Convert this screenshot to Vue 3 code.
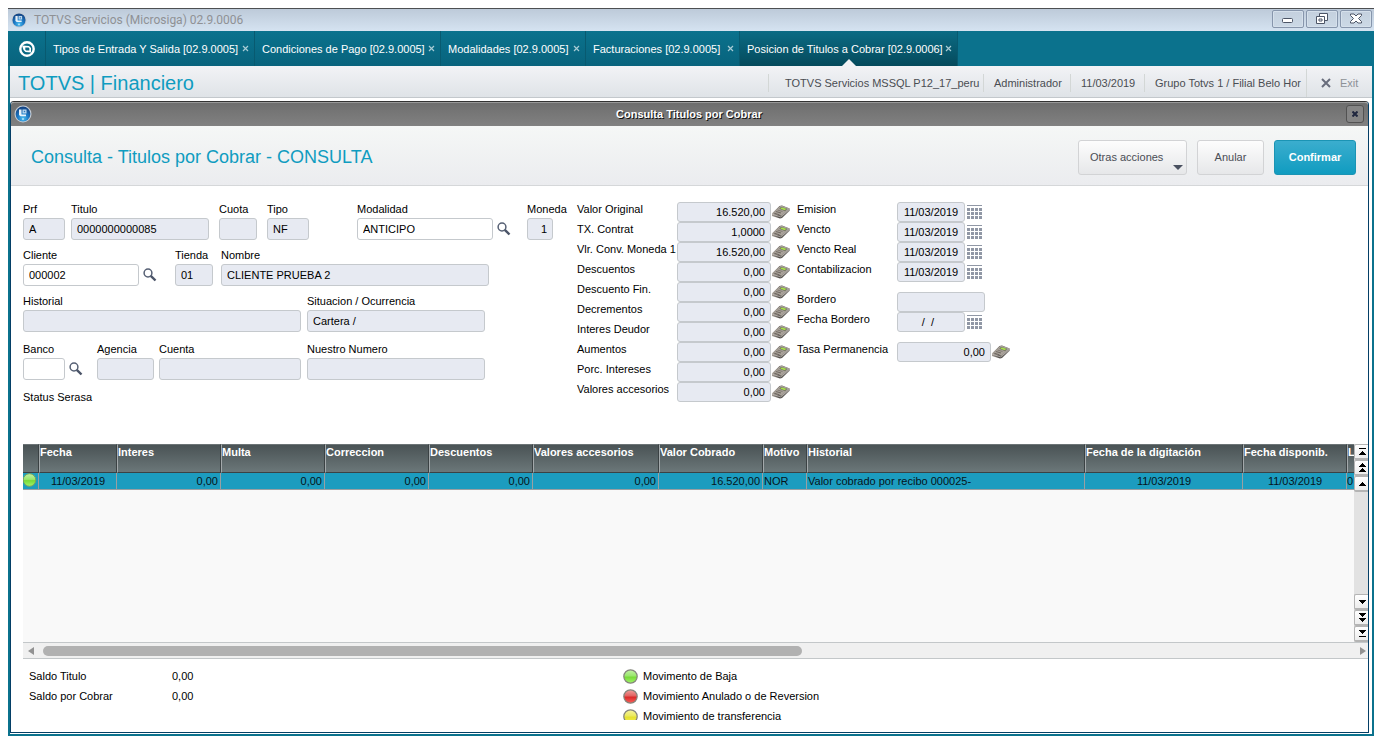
<script setup>
const tabs = [
  { title: 'Tipos de Entrada Y Salida [02.9.0005]', width: 209 },
  { title: 'Condiciones de Pago [02.9.0005]', width: 186 },
  { title: 'Modalidades [02.9.0005]', width: 145 },
  { title: 'Facturaciones [02.9.0005]', width: 154 },
  { title: 'Posicion de Titulos a Cobrar [02.9.0006]', width: 218, active: true },
]

const rows = [
  [
    { id: 'prf', label: 'Prf', value: 'A', width: 42, after: 6 },
    { id: 'titulo', label: 'Titulo', value: '0000000000085', width: 138, after: 10 },
    { id: 'cuota', label: 'Cuota', value: '', width: 38, after: 10 },
    { id: 'tipo', label: 'Tipo', value: 'NF', width: 42, after: 48 },
    { id: 'modalidad', label: 'Modalidad', value: 'ANTICIPO', width: 136, search: true, after: 14 },
    { id: 'moneda', label: 'Moneda', value: '1', width: 26, right: true, after: 0 },
  ],
  [
    { id: 'cliente', label: 'Cliente', value: '000002', width: 116, search: true, after: 16 },
    { id: 'tienda', label: 'Tienda', value: '01', width: 38, after: 8 },
    { id: 'nombre', label: 'Nombre', value: 'CLIENTE PRUEBA 2', width: 268, after: 0 },
  ],
  [
    { id: 'historial', label: 'Historial', value: '', width: 278, after: 6 },
    { id: 'situacion', label: 'Situacion / Ocurrencia', value: 'Cartera /', width: 178, after: 0 },
  ],
  [
    { id: 'banco', label: 'Banco', value: '', width: 42, search: true, after: 12 },
    { id: 'agencia', label: 'Agencia', value: '', width: 57, after: 5 },
    { id: 'cuenta', label: 'Cuenta', value: '', width: 142, after: 6 },
    { id: 'nuestro', label: 'Nuestro Numero', value: '', width: 178, after: 0 },
  ],
]

const amounts = [
  ['Valor Original', '16.520,00'],
  ['TX. Contrat', '1,0000'],
  ['Vlr. Conv. Moneda 1', '16.520,00'],
  ['Descuentos', '0,00'],
  ['Descuento Fin.', '0,00'],
  ['Decrementos', '0,00'],
  ['Interes Deudor', '0,00'],
  ['Aumentos', '0,00'],
  ['Porc. Intereses', '0,00'],
  ['Valores accesorios', '0,00'],
]

const dateGroups = [
  [
    { label: 'Emision', value: '11/03/2019', kind: 'date' },
    { label: 'Vencto', value: '11/03/2019', kind: 'date' },
    { label: 'Vencto Real', value: '11/03/2019', kind: 'date' },
    { label: 'Contabilizacion', value: '11/03/2019', kind: 'date' },
  ],
  [
    { label: 'Bordero', value: '', kind: 'text' },
    { label: 'Fecha Bordero', value: '/  /  ', kind: 'date' },
  ],
  [{ label: 'Tasa Permanencia', value: '0,00', kind: 'number' }],
]

const columns = [
  { label: 'Fecha', width: 78, value: '11/03/2019', align: 'center' },
  { label: 'Interes', width: 104, value: '0,00', align: 'right' },
  { label: 'Multa', width: 104, value: '0,00', align: 'right' },
  { label: 'Correccion', width: 104, value: '0,00', align: 'right' },
  { label: 'Descuentos', width: 104, value: '0,00', align: 'right' },
  { label: 'Valores accesorios', width: 126, value: '0,00', align: 'right' },
  { label: 'Valor Cobrado', width: 104, value: '16.520,00', align: 'right' },
  { label: 'Motivo', width: 44, value: 'NOR', align: 'left' },
  { label: 'Historial', width: 278, value: 'Valor cobrado por recibo 000025-', align: 'left' },
  { label: 'Fecha de la digitación', width: 158, value: '11/03/2019', align: 'center' },
  { label: 'Fecha disponib.', width: 104, value: '11/03/2019', align: 'center' },
]

const legend = [
  { color: 'green', text: 'Movimento de Baja', height: 15 },
  { color: 'red', text: 'Movimiento Anulado o de Reversion', height: 15 },
  { color: 'yellow', text: 'Movimiento de transferencia', height: 11 },
]

const upButtons = [
  { name: 'Primero', d: 'M4 3h7v1H4zM7 6h1v1h1v1h1v1h1v1H4V9h1V8h1V7h1z' },
  { name: 'Pagina anterior', d: 'M7 2h1v1h1v1h1v1h1v1H4V5h1V4h1V3h1zM7 7h1v1h1v1h1v1h1v1H4v-1h1V9h1V8h1z' },
  { name: 'Anterior', d: 'M7 5h1v1h1v1h1v1h1v1H4V8h1V7h1V6h1z' },
]
const downButtons = [
  { name: 'Siguiente', d: 'M4 5h7v1h-1v1H9v1H8v1H7V8H6V7H5V6H4z' },
  { name: 'Pagina siguiente', d: 'M4 2h7v1h-1v1H9v1H8v1H7V5H6V4H5V3H4zM4 7h7v1h-1v1H9v1H8v1H7v-1H6V9H5V8H4z' },
  { name: 'Ultimo', d: 'M4 3h7v1h-1v1H9v1H8v1H7V6H6V5H5V4H4zM4 9h7v1H4z' },
]
</script>

<template>
  <svg class="defs" width="0" height="0" aria-hidden="true">
    <defs>
      <radialGradient id="globe-fill" cx="50%" cy="80%" r="75%">
        <stop offset="0" stop-color="#4fc0f0" />
        <stop offset="0.45" stop-color="#1d7cc8" />
        <stop offset="1" stop-color="#154484" />
      </radialGradient>
      <linearGradient id="ball-green" x1="0" y1="0" x2="0" y2="1">
        <stop offset="0" stop-color="#c2f2a6" /><stop offset="0.45" stop-color="#9be66e" />
        <stop offset="0.55" stop-color="#78da38" /><stop offset="1" stop-color="#a2f56c" />
      </linearGradient>
      <linearGradient id="ball-red" x1="0" y1="0" x2="0" y2="1">
        <stop offset="0" stop-color="#f0a09d" /><stop offset="0.45" stop-color="#e26462" />
        <stop offset="0.55" stop-color="#db2a29" /><stop offset="1" stop-color="#fa625c" />
      </linearGradient>
      <linearGradient id="ball-yellow" x1="0" y1="0" x2="0" y2="1">
        <stop offset="0" stop-color="#f5f3a0" /><stop offset="0.45" stop-color="#ebe95e" />
        <stop offset="0.55" stop-color="#e4e02e" /><stop offset="1" stop-color="#f4f056" />
      </linearGradient>
      <linearGradient id="calc-side" x1="0" y1="0" x2="1" y2="0">
        <stop offset="0" stop-color="#a39c94" /><stop offset="0.45" stop-color="#4f4b47" /><stop offset="1" stop-color="#8f8b86" />
      </linearGradient>
      <symbol id="globe" viewBox="0 0 18 18">
        <circle cx="9" cy="9" r="8.500" fill="#c4ccd4" />
        <circle cx="9" cy="9" r="7.400" fill="url(#globe-fill)" />
        <path d="M5 4.500h2.500v5H12v1.800H6.500L5 10z" fill="#fff" opacity="0.9" />
        <path d="M8.500 4.500h4v4h-4z" fill="#d9ecf9" opacity="0.85" />
        <path d="M9.800 5.800h1.400v1.400H9.800z" fill="#2a7cc0" />
        <circle cx="9" cy="14" r="1" fill="#b5e4fa" />
      </symbol>
      <symbol id="lens" viewBox="0 0 14 14">
        <circle cx="5" cy="5" r="3.900" fill="#fff" stroke="#566074" stroke-width="1.500" />
        <path d="M7.800 7.800l4.700 4.700" stroke="#4b5468" stroke-width="2.400" />
      </symbol>
      <symbol id="calculator" viewBox="0 0 18 14">
        <path d="M0 8.500L7.500 1 10 0.500 17.800 3.500v2.200L10 13 8 13.500 0 11z" fill="url(#calc-side)" />
        <path d="M0.300 8.300L7.800 1.200 10 0.800l7.500 2.700L9.500 10.800z" fill="#a9a29a" />
        <path d="M7.200 3.800L9 1.900l6.300 1.800-2.200 2.500z" fill="#6f7260" />
        <path d="M8.400 3.700L9.600 2.400l4.700 1.300-1.500 1.500z" fill="#a8e04a" />
        <path d="M3.800 6.500l5.200 1.500M2.200 8.200l5.300 1.600" stroke="#6f6861" stroke-width="1" fill="none" />
        <path d="M5.500 5l5 1.500" stroke="#7d766f" stroke-width="0.900" fill="none" />
        <path d="M0.300 9.200L8.800 11.900l8.700-7.700" fill="none" stroke="#cbc7c1" stroke-width="0.700" />
      </symbol>
      <symbol id="calendar" viewBox="0 0 16 14">
        <path d="M0 0h15v1H0zM0 3h3v3H0zM4 3h3v3H4zM8 3h3v3H8zM12 3h3v3h-3zM0 7h3v3H0zM4 7h3v3H4zM8 7h3v3H8zM12 7h3v3h-3zM0 11h3v3H0zM4 11h3v3H4zM8 11h3v3H8zM12 11h3v3h-3z" fill="#9097a5" />
      </symbol>
    </defs>
  </svg>

  <div class="window">
    <header class="caption">
      <svg class="caption-icon" width="16" height="16"><use href="#globe" /></svg>
      <span class="caption-title">TOTVS Servicios (Microsiga) 02.9.0006</span>
      <div class="caption-buttons">
        <button type="button" aria-label="Minimizar">
          <svg width="12" height="12" viewBox="0 0 12 12"><rect x="0.500" y="5.500" width="10" height="4" rx="1" fill="#fff" stroke="#4c5566" /></svg>
        </button>
        <button type="button" aria-label="Restaurar">
          <svg width="12" height="12" viewBox="0 0 12 12" fill="#fff" stroke="#4c5566"><path d="M3.500 0.500h8v7h-8z" /><path d="M0.500 3.500h8v7h-8z" /><path d="M3 6h3v2H3z" /></svg>
        </button>
        <button type="button" aria-label="Cerrar">
          <svg width="12" height="12" viewBox="0 0 12 12"><path d="M0.500 1h3.500l2 2 2-2h3.500v1.500L8.500 5.500l3 3V10H8L6 8l-2 2H0.500V8.500l3-3-3-3z" fill="#fff" stroke="#4c5566" /></svg>
        </button>
      </div>
    </header>

    <nav class="tabs" aria-label="Rutinas abiertas">
      <button class="home" type="button" aria-label="Inicio">
        <svg width="16" height="16" viewBox="0 0 16 16"><circle cx="8" cy="8" r="6.700" fill="none" stroke="#fff" stroke-width="2.400" /><path d="M3 4.500l7 0.500 2 2v4.500L6.500 11 4.500 9z" fill="#fff" /><path d="M6.300 6.500h3.200l0.800 0.800v2.200H7.200L6.300 8.700z" fill="#0a6a85" /></svg>
      </button>
      <div v-for="t in tabs" :key="t.title" class="tab" :class="{ active: t.active }" :style="{ width: t.width + 'px' }">
        <button class="tab-title" type="button">{{ t.title }}</button>
        <button class="tab-close" type="button" :aria-label="'Cerrar ' + t.title">
          <svg width="7" height="7" viewBox="0 0 7 7"><path d="M1 1l5 5M6 1L1 6" stroke="#a9ccd5" stroke-width="1.200" /></svg>
        </button>
      </div>
    </nav>

    <div class="brand">
      <h1>TOTVS | Financiero</h1>
      <ul class="session">
        <li class="s-env">TOTVS Servicios MSSQL P12_17_peru</li>
        <li class="s-user">Administrador</li>
        <li class="s-date">11/03/2019</li>
        <li class="s-group">Grupo Totvs 1 / Filial Belo Hor</li>
        <li class="s-exit">
          <button class="exit" type="button">
            <svg width="10" height="10" viewBox="0 0 10 10"><path d="M1 1l8 8M9 1L1 9" stroke="#686d7c" stroke-width="2" /></svg>
            Exit
          </button>
        </li>
      </ul>
    </div>

    <main class="dialog">
      <div class="dialog-bar">
        <svg width="18" height="18"><use href="#globe" /></svg>
        <span class="dialog-title">Consulta Titulos por Cobrar</span>
        <button class="dialog-close" type="button" aria-label="Cerrar">
          <svg width="6" height="6" viewBox="0 0 6 6"><path d="M0.500 0.500l5 5M5.500 0.500l-5 5" stroke="#20273f" stroke-width="2" /></svg>
        </button>
      </div>

      <div class="actions">
        <h2>Consulta - Titulos por Cobrar - CONSULTA</h2>
        <button class="btn more" type="button">Otras acciones<i class="caret"></i></button>
        <button class="btn cancel" type="button">Anular</button>
        <button class="btn primary" type="button">Confirmar</button>
      </div>

      <form class="form" @submit.prevent>
        <div class="general">
          <div v-for="(row, r) in rows" :key="r" class="row">
            <div v-for="f in row" :key="f.id" class="field" :style="{ marginRight: f.after + 'px' }">
              <label :for="f.id">{{ f.label }}</label>
              <div class="control">
                <input :id="f.id" type="text" :value="f.value" :readonly="!f.search" :class="{ editable: f.search, right: f.right }" :style="{ width: f.width + 'px' }" />
                <button v-if="f.search" class="lookup" type="button" :aria-label="'Buscar ' + f.label"><svg width="14" height="14"><use href="#lens" /></svg></button>
              </div>
            </div>
          </div>
          <p class="serasa">Status Serasa</p>
        </div>

        <div class="stack amounts">
          <div v-for="(a, i) in amounts" :key="a[0]" class="line">
            <label :for="'amount' + i">{{ a[0] }}</label>
            <input :id="'amount' + i" class="number" type="text" :value="a[1]" readonly />
            <button class="tool" type="button" :aria-label="'Calculadora ' + a[0]"><svg width="18" height="14"><use href="#calculator" /></svg></button>
          </div>
        </div>

        <div class="stack">
          <div v-for="(g, k) in dateGroups" :key="k" class="group">
            <div v-for="(f, i) in g" :key="f.label" class="line">
              <label :for="'data' + k + i">{{ f.label }}</label>
              <input :id="'data' + k + i" :class="f.kind" type="text" :value="f.value" readonly />
              <button v-if="f.kind === 'date'" class="tool" type="button" :aria-label="'Calendario ' + f.label"><svg class="cal" width="16" height="14"><use href="#calendar" /></svg></button>
              <button v-if="f.kind === 'number'" class="tool" type="button" :aria-label="'Calculadora ' + f.label"><svg width="18" height="14"><use href="#calculator" /></svg></button>
            </div>
          </div>
        </div>
      </form>

      <section class="browse">
        <div class="browse-main">
          <div class="table-wrap">
            <table>
              <colgroup>
                <col class="col-status" />
                <col v-for="c in columns" :key="c.label" :style="{ width: c.width + 'px' }" />
                <col />
              </colgroup>
              <thead>
                <tr><th scope="col"></th><th v-for="c in columns" :key="c.label" scope="col">{{ c.label }}</th><th scope="col">L</th></tr>
              </thead>
              <tbody>
                <tr>
                  <td class="status"><svg width="14" height="14" viewBox="0 0 14 14"><circle cx="6.500" cy="7" r="6.300" fill="url(#ball-green)" stroke="#7aa35c" /></svg></td>
                  <td v-for="c in columns" :key="c.label" :class="c.align">{{ c.value }}</td>
                  <td>0</td>
                </tr>
              </tbody>
            </table>
          </div>
          <div class="v-scroll">
            <button v-for="b in upButtons" :key="b.name" type="button" :aria-label="b.name"><svg width="13" height="13"><path :d="b.d" /></svg></button>
            <span class="v-track"></span>
            <button v-for="b in downButtons" :key="b.name" type="button" :aria-label="b.name"><svg width="13" height="13"><path :d="b.d" /></svg></button>
          </div>
        </div>
        <div class="h-scroll">
          <button type="button" aria-label="Izquierda"><svg width="6" height="8"><path d="M6 0v8L0 4z" fill="#929292" /></svg></button>
          <span class="h-track"><span class="h-thumb"></span></span>
          <button type="button" aria-label="Derecha"><svg width="6" height="8"><path d="M0 0v8l6-4z" fill="#929292" /></svg></button>
        </div>
      </section>

      <footer class="summary">
        <dl>
          <dt>Saldo Titulo</dt><dd>0,00</dd>
          <dt>Saldo por Cobrar</dt><dd>0,00</dd>
        </dl>
        <ul>
          <li v-for="l in legend" :key="l.color">
            <span class="ball"><svg width="15" :height="l.height"><circle cx="7.500" cy="7.500" r="6.700" :fill="'url(#ball-' + l.color + ')'" stroke="#85857c" stroke-width="1.200" /></svg></span>
            {{ l.text }}
          </li>
        </ul>
      </footer>
    </main>
  </div>
</template>

<style>
body { background: #fff; }
</style>

<style scoped>
* { box-sizing: border-box; }
button, input { font: inherit; color: inherit; }
button { padding: 0; border: 0; background: none; cursor: pointer; }
svg { display: block; flex: none; }
h1, h2, p, ul, dl, dd { margin: 0; padding: 0; font-weight: normal; }
ul { list-style: none; }
.defs { position: absolute; }

.window {
  display: flex;
  flex-direction: column;
  min-height: calc(100vh - 16px);
  margin: 8px;
  border: 2px solid #0b728d;
  border-top: 0;
  font: 11px/14px "Liberation Sans", Arial, sans-serif;
  color: #000;
}
.caption {
  display: flex;
  align-items: center;
  height: 23px;
  margin: 0 -2px;
  padding-left: 3px;
  border-top: 1px solid #4d4f52;
  background: linear-gradient(#bdcad9, #d5e3f1);
}
.caption-title { margin-left: 7px; flex: 1; font: 12px/16px Roboto, "Noto Sans", sans-serif; color: #8f9195; }
.caption-buttons { display: flex; align-self: flex-start; gap: 2px; padding: 1px 2px 0 0; }
.caption-buttons button {
  display: flex; align-items: center; justify-content: center;
  width: 32px; height: 18px;
  border: 1px solid #8796ac; border-radius: 2px;
  background: linear-gradient(#c4d0de, #ccd9e6);
  box-shadow: inset 0 0 0 1px #d5e0eb;
}

.tabs { display: flex; height: 35px; margin: 0 -2px; background: #0b728d; }
.home { display: flex; align-items: center; justify-content: center; width: 38px; border-right: 1px solid #085a70; background: linear-gradient(#0b728d, #08637d); }
.tab {
  position: relative;
  display: flex; align-items: center; justify-content: space-between;
  padding: 0 5px 0 7px;
  border-right: 1px solid #085a70;
  background: linear-gradient(#0b728d, #08637d);
  color: #fff; white-space: nowrap;
}
.tab.active { background: linear-gradient(#0b6b84, #054a5c); }
.tab.active::after {
  content: ""; position: absolute; left: 50%; bottom: 0; margin-left: -7px;
  border: 7px solid transparent; border-top: 0; border-bottom-color: #f1f2f5;
}

.brand {
  display: flex; align-items: center; justify-content: space-between;
  height: 32px; padding-left: 8px;
  border-bottom: 1px solid #c3c8cc;
  background: linear-gradient(#f2f3f6, #dfe3e7);
}
h1 { padding-top: 2px; font-size: 20px; line-height: 30px; color: #0f9cc0; }
.session { display: flex; height: 31px; padding-top: 2px; align-items: center; color: #4a4d52; white-space: nowrap; }
.session li { height: 18px; line-height: 18px; border-left: 1px solid #d3d7d6; padding-left: 10px; }
.s-env { width: 215px; }
.session .s-env { padding-left: 16px; }
.s-user { width: 87px; }
.s-date { width: 74px; }
.s-group { width: 162px; }
.session .s-exit { display: flex; align-items: center; width: 66px; height: 28px; padding-left: 14px; }
.exit { display: flex; align-items: center; gap: 9px; color: #8d9197; }

.dialog {
  display: flex; flex-direction: column; flex: 1;
  margin: 3px 3px 1px 0;
  border: 1px solid #053f66; border-top-color: #333;
  border-radius: 4px 4px 0 0;
}
.dialog-bar {
  display: flex; align-items: center;
  height: 24px; padding: 0 4px 2px 3px;
  border-top: 1px solid #999; border-radius: 3px 3px 0 0;
  background: linear-gradient(#6e6e6e, #818181);
}
.dialog-title { flex: 1; text-align: center; font-weight: bold; color: #fff; text-shadow: 1px 1px 0 #111; }
.dialog-close { display: flex; align-items: center; justify-content: center; width: 18px; height: 18px; border: 1px solid #525252; border-radius: 3px; background: #858585; }

.actions {
  display: flex; align-items: center; gap: 10px;
  height: 60px; padding: 3px 12px 0 20px;
  border-bottom: 1px solid #d5d7d9;
  background: linear-gradient(#f5f7f6, #ebecef);
}
h2 { flex: 1; font-size: 18px; line-height: 24px; color: #0f9cc0; }
.btn {
  position: relative; height: 35px;
  border: 1px solid #d2d3d5; border-radius: 3px;
  background: linear-gradient(#fdfdfd, #e6e7e9);
  color: #4a4d55;
}
.more { width: 109px; padding-left: 11px; text-align: left; }
.cancel { width: 67px; }
.primary { width: 82px; border-color: #1b94b4; background: linear-gradient(#3badce, #109cc0); color: #fff; font-weight: bold; }
.caret { position: absolute; right: 3px; bottom: 4px; border: 5px solid transparent; border-bottom: 0; border-top-color: #4a5160; }

.form { display: flex; padding: 15px 12px 39px; }
.general { width: 554px; flex: none; }
.row { display: flex; margin-bottom: 7px; }
.row:nth-child(3), .row:nth-child(4) { margin-bottom: 9px; }
.field label { display: block; width: 0; height: 17px; line-height: 17px; white-space: nowrap; }
.control { display: flex; align-items: center; }
input {
  height: 22px; padding: 0 5px;
  border: 1px solid #c5c9cd; border-radius: 3px;
  background: #e7eaf2; outline: 0;
}
.editable { background: #fff; }
.right { text-align: right; }
.lookup { width: 20px; padding-left: 4px; }
.serasa { line-height: 16px; }

.stack { padding-top: 1px; width: 220px; }
.line { display: flex; align-items: center; height: 20px; }
.line label { align-self: flex-start; width: 100px; flex: none; white-space: nowrap; }
.line input { height: 20px; }
.number { width: 94px; text-align: right; }
.date { width: 68px; text-align: center; white-space: pre; }
.text { width: 88px; }
.tool { padding-left: 1px; }
.cal { margin-left: 1px; }
.group { margin-bottom: 10px; }

.browse { display: flex; flex-direction: column; flex: 1; margin-left: 12px; }
.browse-main { display: flex; flex: 1; background: #f9f9f9; }
.table-wrap { flex: 1; min-width: 0; overflow: hidden; }
table { width: 100%; table-layout: fixed; border-collapse: separate; border-spacing: 0; }
.col-status { width: 16px; }
th, td { padding: 0; overflow: hidden; white-space: nowrap; }
th {
  height: 29px; vertical-align: top; text-align: left; line-height: 15px;
  border-top: 1px solid #6c7476; border-right: 1px solid #3b4244; border-bottom: 1px solid #3b4244; border-left: 1px solid #a3a9ab;
  background: linear-gradient(#4a5355, #6b7779); color: #fff;
}
th:first-child { border-left: 0; }
td { height: 17px; padding-left: 1px; line-height: 16px; border-right: 1px solid #9a9fa2; border-bottom: 1px solid #9a9fa2; background: #1c9cbf; color: #06141a; text-align: left; }
th:last-child, td:last-child { border-right: 0; padding: 0; }
td.right { padding-right: 2px; text-align: right; }
td.center { text-align: center; }
td.status { padding: 0; vertical-align: top; }

.v-scroll { display: flex; flex-direction: column; width: 14px; background: #e2e2e2; }
.v-scroll button { display: flex; height: 16px; border: 1px solid #b4b4b4; border-right: 0; border-bottom-width: 2px; border-radius: 2px 0 0 2px; background: linear-gradient(#fff, #ededed); overflow: hidden; }
.v-track { flex: 1; }
.h-scroll { display: flex; align-items: center; height: 17px; padding: 0 2px 0 5px; border-top: 1px solid #c3c7c9; border-bottom: 1px solid #c3c7c9; background: #f0f0f0; }
.h-track { flex: 1; margin: 0 9px; }
.h-thumb { display: block; width: 58%; height: 10px; border-radius: 5px; background: #b1b1b1; }

.summary { display: flex; padding: 7px 18px 6px; line-height: 20px; }
dl { display: grid; grid-template-columns: 143px auto; grid-auto-rows: 20px; width: 594px; justify-content: start; }
.summary li { display: flex; align-items: center; gap: 5px; height: 20px; }
.ball { height: 15px; }
</style>
